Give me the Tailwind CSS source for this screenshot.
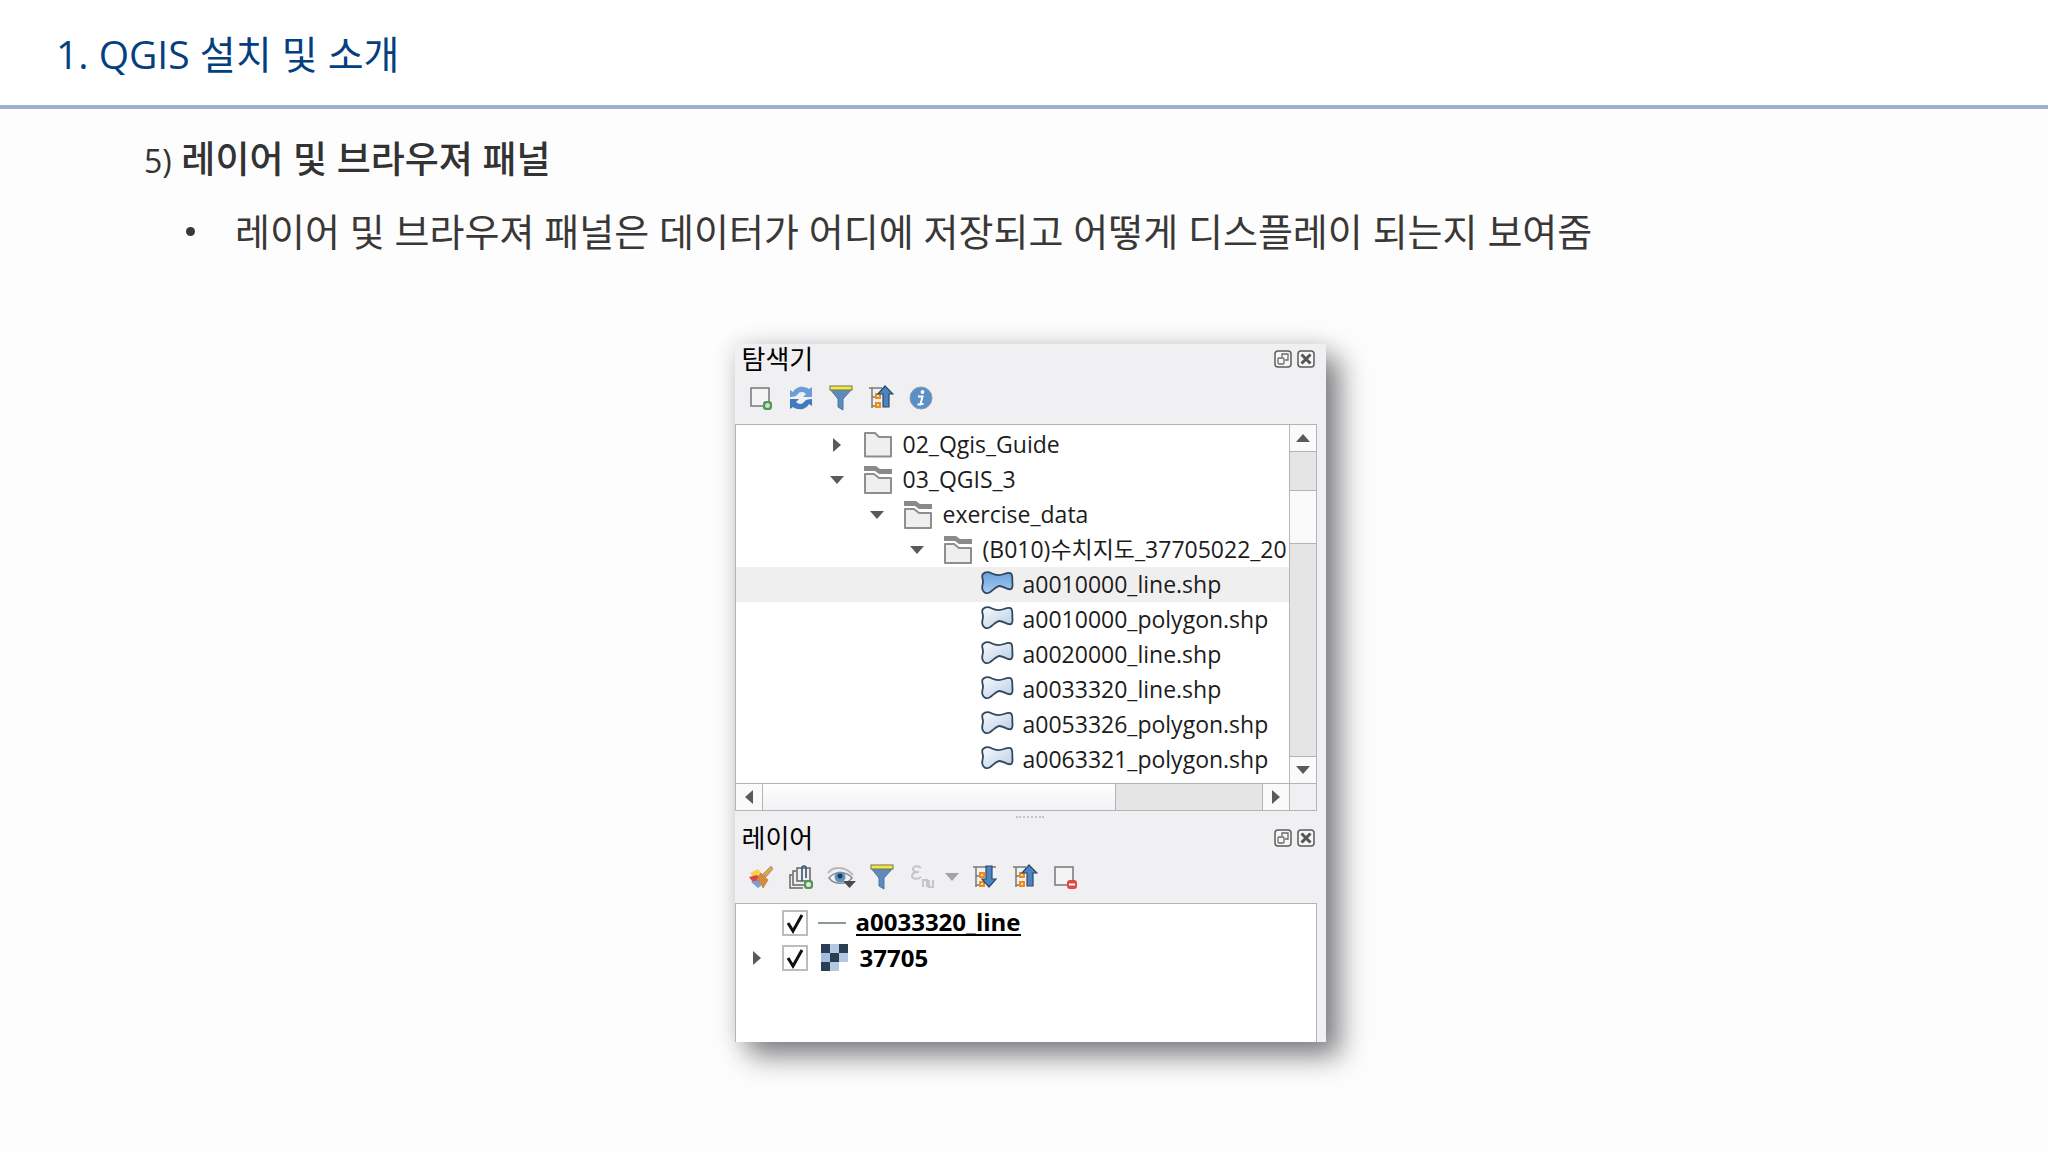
<!DOCTYPE html>
<html lang="ko">
<head>
  <meta charset="UTF-8" />
  <meta name="viewport" content="width=device-width, initial-scale=1.0"/>
  <title>1. QGIS 설치 및 소개</title>
  <script src="https://cdn.jsdelivr.net/npm/@tailwindcss/browser@4"></script>
</head>
<body class="min-h-screen bg-[#fdfdfd] font-['Open_Sans','Noto_Sans_CJK_KR',sans-serif] text-[#1c1c1c]">

  <!-- Shared icons -->
  <svg class="absolute size-0" aria-hidden="true">
    <defs>
      <linearGradient id="g-blue" x1="0" y1="0" x2="0" y2="1"><stop offset="0" stop-color="#6aa0da"/><stop offset="1" stop-color="#a3cdf2"/></linearGradient>
      <linearGradient id="g-pale" x1="0" y1="0" x2="1" y2="1"><stop offset="0" stop-color="#fafbfd"/><stop offset="1" stop-color="#b4cde6"/></linearGradient>
    </defs>
    <symbol id="folder" viewBox="0 0 30 28">
      <path d="M2 2h10l4 4h12v19.500H2z" fill="#f0eff0" stroke="#8e8e8e" stroke-width="2" stroke-linejoin="round"/>
    </symbol>
    <symbol id="folder-open" viewBox="0 0 30 30">
      <path d="M1 1h12l4 3h12v5H16l-4-3H1z" fill="#8a8a8a"/>
      <path d="M2 9h9l5 4h12v15H2z" fill="#f0eff0" stroke="#8e8e8e" stroke-width="2" stroke-linejoin="round"/>
    </symbol>
    <symbol id="shape" viewBox="0 0 34 24">
      <path d="M3 3C6 0 9 1 12 2.500c4 2 8 2 12 .5 3-1 6-2 7.500 0 1.500 3 .5 7 1 10 .3 4-1 6-4 5-3-.7-6-3-9-3-3 0-6 4-10 6.500-3 1.500-6 .5-7-3-1-3 .5-5 .5-8S1 5 3 3z" stroke="#33475c" stroke-width="1.800"/>
    </symbol>
    <symbol id="filter" viewBox="0 0 24 26">
      <path d="M1 4l8 10v8l5 3V14l9-10z" fill="#5d8abb" stroke="#4a75a5"/>
      <rect x="1" y="1" width="22" height="4" fill="#f4e83c" stroke="#77735a"/>
    </symbol>
    <symbol id="collapse" viewBox="0 0 26 26">
      <path d="M1 3h13M4 3v20M4 12h4M4 21h4" fill="none" stroke="#7a7a7a" stroke-width="1.500"/>
      <path d="M8 9h4v4H8zM8 18h4v4H8z" fill="#fde08a" stroke="#ee8a1e" stroke-width="2"/>
      <path d="M17 1l8 8h-4v13h-6V9h-5z" fill="#4f83bd" stroke="#274a70" stroke-width="1.200"/>
    </symbol>
    <symbol id="expand" viewBox="0 0 26 26">
      <path d="M1 3h23M4 3v20M4 12h4M4 21h4" fill="none" stroke="#7a7a7a" stroke-width="1.500"/>
      <path d="M8 9h4v4H8zM8 18h4v4H8z" fill="#fde08a" stroke="#ee8a1e" stroke-width="2"/>
      <path d="M14 2h6v13h4l-7 8-7-8h4z" fill="#4f83bd" stroke="#274a70" stroke-width="1.200"/>
    </symbol>
    <symbol id="float" viewBox="0 0 18 18">
      <rect x="1" y="1" width="16" height="16" rx="3" fill="#f6f6f6" stroke="#5c5c5c" stroke-width="1.500"/>
      <path d="M8 7V4h6v6h-3" fill="none" stroke="#6a6a6a" stroke-width="1.300"/>
      <rect x="4" y="8" width="6" height="6" rx="1" fill="none" stroke="#6a6a6a" stroke-width="1.300"/>
    </symbol>
    <symbol id="close" viewBox="0 0 18 18">
      <rect x="1" y="1" width="16" height="16" rx="3" fill="#f6f6f6" stroke="#5c5c5c" stroke-width="1.500"/>
      <path d="M4.500 4.500l9 9M13.500 4.500l-9 9" stroke="#555" stroke-width="3"/>
    </symbol>
    <symbol id="right" viewBox="0 0 8 14"><path d="M0 0l8 7-8 7z" fill="#5a5a5a"/></symbol>
    <symbol id="down" viewBox="0 0 14 8"><path d="M0 0h14L7 8z" fill="#5a5a5a"/></symbol>
  </svg>

  <header class="flex h-[109px] items-center border-b-4 border-[#9db0cc] bg-white px-14 pt-0.5">
    <h1 class="text-[39px] leading-none text-[#04407f]">1. QGIS 설치 및 소개</h1>
  </header>

  <main>
    <h2 class="mt-[22px] pl-36 text-[37px] leading-[56px] font-medium text-[#333]"><span class="text-[32px] font-normal">5)</span> 레이어 및 브라우져 패널</h2>
    <ul class="mt-[14px] pl-[186px] text-[38px] leading-[56px] text-[#3a3737]">
      <li class="flex items-center"><span class="mr-10 size-[9px] rounded-full bg-[#3a3737]"></span>레이어 및 브라우져 패널은 데이터가 어디에 저장되고 어떻게 디스플레이 되는지 보여줌</li>
    </ul>

    <div class="mt-[85px] flex justify-center pb-16 pl-3">
      <div class="w-[591px] bg-[#f0eff1] text-[23px] shadow-[14px_14px_26px_rgba(50,48,54,0.6),0_0_20px_rgba(50,48,54,0.14)]">

        <!-- Browser -->
        <section>
          <div class="flex h-[30px] items-center pr-[11px] pl-[7px]">
            <h3 class="mr-auto text-[26px] leading-none text-black">탐색기</h3>
            <button aria-label="분리" class="mr-[5px]"><svg class="size-[18px]"><use href="#float"/></svg></button>
            <button aria-label="닫기"><svg class="size-[18px]"><use href="#close"/></svg></button>
          </div>
          <div class="flex h-[50px] items-center pb-0.5 pl-1.5">
            <button aria-label="레이어 추가" class="flex w-10 justify-center">
              <svg class="size-6" viewBox="0 0 24 24"><path d="M2 2h18v18H2z" fill="#f4f4f4" stroke="#777" stroke-width="1.500"/><rect x="14" y="15" width="9" height="9" rx="3" fill="#55935a"/><circle cx="18.500" cy="19.500" r="2.500" fill="#bfe6c0"/></svg>
            </button>
            <button aria-label="새로고침" class="flex w-10 justify-center">
              <svg class="size-6" viewBox="0 0 24 24"><path d="M1 11V4l3 2C8-1 16 0 20 3l3-2v10h-9l3-3c-3-3-7-2-8 0-1 2-4 3-8 3z" fill="#6b9ed6"/><path d="M23 13v7l-3-2c-4 7-12 6-16 3l-3 2V13h9l-3 3c3 3 7 2 8 0 1-2 4-3 8-3z" fill="#4079bd"/></svg>
            </button>
            <button aria-label="필터" class="flex w-10 justify-center"><svg class="h-[26px] w-6"><use href="#filter"/></svg></button>
            <button aria-label="모두 접기" class="flex w-10 justify-center"><svg class="size-[26px]"><use href="#collapse"/></svg></button>
            <button aria-label="속성" class="flex w-10 justify-center">
              <svg class="size-6" viewBox="0 0 24 24"><circle cx="12" cy="12" r="11" fill="#5a8fc8" stroke="#8c9cad"/><circle cx="13.500" cy="6" r="1.900" fill="#fff"/><path d="M9 10.500h4.500L11.500 18h3M8.500 18.500H12" fill="none" stroke="#fff" stroke-width="2"/></svg>
            </button>
          </div>

          <div class="mr-[9px] grid grid-cols-[1fr_27px] border border-[#b4b3b5] bg-white">
            <ul class="h-[358px] overflow-hidden pt-0.5 leading-[35px] whitespace-nowrap">
              <li class="flex h-[35px] items-center pl-[96px]"><svg class="mr-[22px] ml-px h-[14px] w-2 shrink-0"><use href="#right"/></svg><svg class="mr-[10px] h-[28px] w-[30px] shrink-0"><use href="#folder"/></svg>02_Qgis_Guide</li>
              <li class="flex h-[35px] items-center pl-[94px]"><svg class="mr-[19px] h-2 w-[14px] shrink-0"><use href="#down"/></svg><svg class="mr-[10px] size-[30px] shrink-0"><use href="#folder-open"/></svg>03_QGIS_3</li>
              <li class="flex h-[35px] items-center pl-[134px]"><svg class="mr-[19px] h-2 w-[14px] shrink-0"><use href="#down"/></svg><svg class="mr-[10px] size-[30px] shrink-0"><use href="#folder-open"/></svg>exercise_data</li>
              <li class="flex h-[35px] items-center pl-[174px]"><svg class="mr-[19px] h-2 w-[14px] shrink-0"><use href="#down"/></svg><svg class="mr-[10px] size-[30px] shrink-0"><use href="#folder-open"/></svg><span class="min-w-0 overflow-hidden">(B010)수치지도_37705022_20</span></li>
              <li class="flex h-[35px] items-center bg-[#f0eff0] pl-[244px]"><svg class="mr-[9px] mb-1 h-6 w-[34px] shrink-0 fill-[url(#g-blue)]"><use href="#shape"/></svg>a0010000_line.shp</li>
              <li class="flex h-[35px] items-center pl-[244px]"><svg class="mr-[9px] mb-1 h-6 w-[34px] shrink-0 fill-[url(#g-pale)]"><use href="#shape"/></svg>a0010000_polygon.shp</li>
              <li class="flex h-[35px] items-center pl-[244px]"><svg class="mr-[9px] mb-1 h-6 w-[34px] shrink-0 fill-[url(#g-pale)]"><use href="#shape"/></svg>a0020000_line.shp</li>
              <li class="flex h-[35px] items-center pl-[244px]"><svg class="mr-[9px] mb-1 h-6 w-[34px] shrink-0 fill-[url(#g-pale)]"><use href="#shape"/></svg>a0033320_line.shp</li>
              <li class="flex h-[35px] items-center pl-[244px]"><svg class="mr-[9px] mb-1 h-6 w-[34px] shrink-0 fill-[url(#g-pale)]"><use href="#shape"/></svg>a0053326_polygon.shp</li>
              <li class="flex h-[35px] items-center pl-[244px]"><svg class="mr-[9px] mb-1 h-6 w-[34px] shrink-0 fill-[url(#g-pale)]"><use href="#shape"/></svg>a0063321_polygon.shp</li>
            </ul>
            <!-- vertical scroll bar -->
            <div class="flex flex-col border-l border-[#b4b3b5] bg-[#e6e5e6]">
              <button aria-label="위로" class="flex h-[27px] items-center justify-center border-b border-[#b4b3b5] bg-[#fbfafb]"><svg class="h-2 w-[14px] rotate-180"><use href="#down"/></svg></button>
              <div class="mt-[38px] h-[54px] border-y border-[#b4b3b5] bg-[#fbfafb]"></div>
              <button aria-label="아래로" class="mt-auto flex h-[27px] items-center justify-center border-t border-[#b4b3b5] bg-[#fbfafb]"><svg class="h-2 w-[14px]"><use href="#down"/></svg></button>
            </div>
            <!-- horizontal scroll bar -->
            <div class="flex h-[27px] border-t border-[#b4b3b5] bg-[#e6e5e6]">
              <button aria-label="왼쪽" class="flex w-[27px] items-center justify-center border-r border-[#b4b3b5] bg-[#fbfafb]"><svg class="h-[14px] w-2 rotate-180"><use href="#right"/></svg></button>
              <div class="w-[353px] border-r border-[#b4b3b5] bg-gradient-to-b from-white to-[#f3f1f4]"></div>
              <button aria-label="오른쪽" class="ml-auto flex w-[27px] items-center justify-center border-l border-[#b4b3b5] bg-[#fbfafb]"><svg class="h-[14px] w-2"><use href="#right"/></svg></button>
            </div>
            <div class="border-t border-l border-[#b4b3b5] bg-[#f0eff1]"></div>
          </div>
        </section>

        <div class="flex h-3 items-center justify-center"><div class="w-7 border-t-2 border-dotted border-[#c4c3c5]"></div></div>

        <!-- Layers -->
        <section>
          <div class="flex h-[30px] items-center pr-[11px] pl-[7px]">
            <h3 class="mr-auto text-[26px] leading-none text-black">레이어</h3>
            <button aria-label="분리" class="mr-[5px]"><svg class="size-[18px]"><use href="#float"/></svg></button>
            <button aria-label="닫기"><svg class="size-[18px]"><use href="#close"/></svg></button>
          </div>
          <div class="flex h-[50px] items-center pb-0.5 pl-1.5">
            <button aria-label="스타일" class="flex w-10 justify-center">
              <svg class="size-6" viewBox="0 0 24 24"><path d="M1 8l8-4 4 5-6 6z" fill="#f3d54a"/><path d="M0 12l8-2 4 6-6 4z" fill="#e0434b"/><path d="M2 17l7-2 4 5-4 3z" fill="#7a9fd8"/><path d="M22 1l2 3-7 8-3-3z" fill="#d9a35a" stroke="#a9743a" stroke-width=".6"/><path d="M12 8l7 7-5 8c-1-4-3-7-7-8z" fill="#d58a3c" stroke="#b06d2c" stroke-width=".6"/></svg>
            </button>
            <button aria-label="그룹 추가" class="flex w-10 justify-center">
              <svg class="size-[26px]" viewBox="0 0 26 26"><g fill="none" stroke="#666" stroke-width="1.500"><path d="M4 11H2v13h13"/><path d="M8 7H5v14h13"/><rect x="9" y="4" width="13" height="13"/></g><path d="M14 17V4a2 2 0 0 1 4 0v10" fill="none" stroke="#33567c" stroke-width="1.600"/><rect x="16" y="16" width="9" height="9" rx="3" fill="#55935a"/><circle cx="20.500" cy="20.500" r="2.500" fill="#d6f0d6"/></svg>
            </button>
            <button aria-label="가시성 관리" class="flex w-[42px] justify-center">
              <svg class="h-[26px] w-[30px]" viewBox="0 0 30 26"><path d="M1 9C6 2 18 2 26 11" fill="none" stroke="#b9b9b9" stroke-width="2"/><path d="M2 14c5-7 18-7 23 0-5 7-18 7-23 0z" fill="#f2f4f6" stroke="#8c8c8c" stroke-width="1.500"/><circle cx="13" cy="13" r="5.500" fill="#5f93c4"/><circle cx="13" cy="12" r="2.500" fill="#1f3c5a"/><path d="M16 17h13l-6.500 7z" fill="#4a4a4a"/></svg>
            </button>
            <button aria-label="필터" class="flex w-[38px] justify-center"><svg class="h-[26px] w-6"><use href="#filter"/></svg></button>
            <button aria-label="표현식 필터" class="flex w-[42px] justify-center" disabled>
              <svg class="h-[26px] w-6" viewBox="0 0 24 26"><g fill="none" stroke="#c6c5c7" stroke-width="2"><path d="M11 4C8 1 3 2 3 5s3 3 6 3c-5 0-7 1-7 4s6 4 9 1"/><path d="M13 23v-7h4v7M19 16v7h4v-7"/></g></svg>
            </button>
            <button aria-label="표현식 필터 메뉴" class="mr-1 flex w-[18px] justify-center"><svg class="h-2 w-[14px] opacity-50"><use href="#down"/></svg></button>
            <button aria-label="모두 펼치기" class="flex w-10 justify-center"><svg class="size-[26px]"><use href="#expand"/></svg></button>
            <button aria-label="모두 접기" class="flex w-10 justify-center"><svg class="size-[26px]"><use href="#collapse"/></svg></button>
            <button aria-label="레이어 제거" class="flex w-10 justify-center">
              <svg class="size-6" viewBox="0 0 24 24"><path d="M2 2h18v18H2z" fill="#f4f4f4" stroke="#777" stroke-width="1.500"/><rect x="14" y="15" width="10" height="9" rx="3" fill="#e04848"/><path d="M16 19.500h6" stroke="#fff" stroke-width="2"/></svg>
            </button>
          </div>

          <ul class="mr-[9px] h-[139px] border border-b-0 border-[#b4b3b5] bg-white pt-px text-[24px] font-bold text-black">
            <li class="flex h-[35px] items-center pl-[46px]">
              <span class="relative mr-[10px] size-[26px]">
                <input id="layer-line" type="checkbox" checked class="peer block size-[26px] appearance-none border-2 border-[#bcbbbd] bg-white"/>
                <svg class="pointer-events-none absolute inset-0 hidden peer-checked:block" viewBox="0 0 26 26"><path d="M6 13l5 8L20 5" fill="none" stroke="#111" stroke-width="3"/></svg>
              </span>
              <span class="mr-[10px] h-0 w-7 border-t-2 border-[#8a9a90]"></span>
              <label for="layer-line" class="border-b-2 border-black leading-[24px]">a0033320_line</label>
            </li>
            <li class="flex h-[35px] items-center pl-[17px]">
              <svg class="mr-[21px] h-[14px] w-2"><use href="#right"/></svg>
              <span class="relative mr-[13px] size-[26px]">
                <input id="layer-raster" type="checkbox" checked class="peer block size-[26px] appearance-none border-2 border-[#bcbbbd] bg-white"/>
                <svg class="pointer-events-none absolute inset-0 hidden peer-checked:block" viewBox="0 0 26 26"><path d="M6 13l5 8L20 5" fill="none" stroke="#111" stroke-width="3"/></svg>
              </span>
              <svg class="mr-3 size-[27px]" viewBox="0 0 27 27"><path d="M0 0h27v18h-9v9H0z" fill="#b3c8e3"/><path d="M0 0h9v9H0zM18 0h9v9h-9zM9 9h9v9H9zM0 18h9v9H0z" fill="#2b3d52"/><path d="M0 9h9v9H0z" fill="#a6bedd"/></svg>
              <label for="layer-raster">37705</label>
            </li>
          </ul>
        </section>
      </div>
    </div>
  </main>
</body>
</html>
